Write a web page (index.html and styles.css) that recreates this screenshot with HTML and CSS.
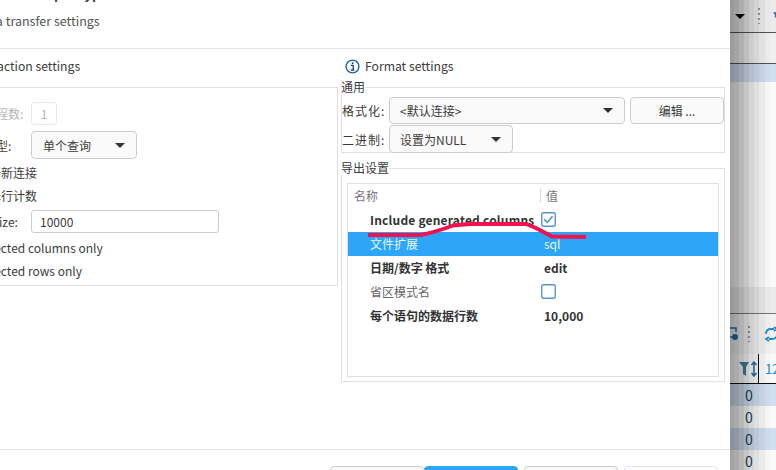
FILE: index.html
```html
<!DOCTYPE html>
<html lang="zh">
<head>
<meta charset="utf-8">
<title>Data transfer settings</title>
<link rel="stylesheet" href="styles.css">
</head>
<body>
<div class="screen">
  <main class="dialog">
    <header class="dialog-head">
      <div class="dialog-title">Transfer output type</div>
      <div class="dialog-sub">Data transfer settings</div>
    </header>
    <div class="columns">
      <section class="col-left">
        <div class="sec-title">Transaction settings</div>
        <div class="panel">
          <div class="form-row row-disabled">
            <span class="label muted">并行线程数:</span>
            <span class="input input-small muted">1</span>
          </div>
          <div class="form-row row-select">
            <span class="label">查询类型:</span>
            <span class="select select-query">单个查询<i class="caret"></i></span>
          </div>
          <div class="check-row first">打开新连接</div>
          <div class="check-row">选择行计数</div>
          <div class="form-row row-fetch">
            <span class="label">Fetch size:</span>
            <span class="input input-wide">10000</span>
          </div>
          <div class="check-row sel-first">Selected columns only</div>
          <div class="check-row">Selected rows only</div>
        </div>
      </section>
      <section class="col-right">
        <div class="sec-title sec-title-right">
          <svg class="info" width="15" height="15" viewBox="0 0 15 15"><circle cx="7.5" cy="7.5" r="6.4" fill="none" stroke="#1f5f9f" stroke-width="1.4"/><rect x="6.800" y="3.300" width="1.600" height="1.700" fill="#1f3f6f"/><path d="M5.900 6.400h2.300v4.500M5.800 11h3.500" fill="none" stroke="#1f3f6f" stroke-width="1.300"/></svg>
          Format settings
        </div>
        <fieldset class="group group-general">
          <legend>通用</legend>
          <div class="g-row g-row-1">
            <span class="g-label">格式化:</span>
            <span class="select select-conn">&lt;默认连接&gt;<i class="caret"></i></span>
            <span class="btn-edit">编辑 ...</span>
          </div>
          <div class="g-row">
            <span class="g-label">二进制:</span>
            <span class="select select-binary">设置为NULL<i class="caret"></i></span>
          </div>
        </fieldset>
        <fieldset class="group group-export">
          <legend>导出设置</legend>
          <div class="table">
            <div class="t-head"><span class="th-name">名称</span><span class="th-val">值</span></div>
            <div class="t-row bold"><span class="t-name t-latin">Include generated columns</span><span class="t-val t-check"><svg width="15" height="15" viewBox="0 0 15 15"><rect x=".75" y=".75" width="13.5" height="13.5" rx="1.5" fill="#fff" stroke="#5b93d0" stroke-width="1.4"/><path d="M3.200 7.400l3 3 5.400-6" fill="none" stroke="#5b93d0" stroke-width="1.600"/></svg></span></div>
            <div class="t-row selected"><span class="t-name">文件扩展</span><span class="t-val">sql</span></div>
            <div class="t-row bold"><span class="t-name">日期/数字 格式</span><span class="t-val">edit</span></div>
            <div class="t-row plain"><span class="t-name">省区模式名</span><span class="t-val t-check"><svg width="15" height="15" viewBox="0 0 15 15"><rect x=".75" y=".75" width="13.5" height="13.5" rx="1.5" fill="#fff" stroke="#5b93d0" stroke-width="1.4"/></svg></span></div>
            <div class="t-row bold"><span class="t-name">每个语句的数据行数</span><span class="t-val">10,000</span></div>
          </div>
        </fieldset>
      </section>
    </div>
    <footer class="dialog-foot">
      <span class="foot-btn"></span>
      <span class="foot-btn primary"></span>
      <span class="foot-btn gap"></span>
      <span class="foot-btn gap disabled"></span>
    </footer>
    <svg class="scribble" width="730" height="470" viewBox="0 0 730 470"><path d="M368 235H421Q436 232 453 225.500L470 224H526L536 228L552 236.500L586 237" fill="none" stroke="#f0134f" stroke-width="4"/></svg>
  </main>
  <aside class="backdrop">
    <div class="b-tool"><i class="caret dark-caret"></i><span class="dots d1"></span>
      <svg class="star" width="8" height="14" viewBox="0 0 8 14"><path d="M4 0l1 3 3 .5L5.500 6 6 9 4 7.500 1.500 9 2 6 0 3.500 3 3z" fill="#3a6fb0"/><path d="M3 8l5 4v2H6z" fill="#e0b060"/></svg></div>
    <div class="b-bar"></div>
    <div class="b-blue"></div>
    <div class="b-white"></div>
    <div class="b-grey"></div>
    <div class="b-tool2">
      <svg class="tool-doc" width="9" height="14" viewBox="0 0 9 14"><path d="M0 1h6v4M0 10h2" fill="none" stroke="#1f6fae" stroke-width="1.500"/><circle cx="5" cy="10" r="3" fill="#1f6fae"/></svg>
      <span class="dots d2"></span>
      <svg class="tool-sync" width="12" height="16" viewBox="0 0 12 16"><path d="M1 8Q1 3 6 3h3M9 1l3 2-3 2M12 8Q12 13 7 13H4M4 11l-3 2 3 2" fill="none" stroke="#1f8fd0" stroke-width="1.800"/></svg>
    </div>
    <div class="b-head">
      <svg class="filter" width="18" height="16" viewBox="0 0 18 16"><path d="M0 1h10L7 6v9L4 13V6z" fill="#3f7f9f"/><path d="M15 1v14M12.500 4L15 1l2.500 3M12.500 12l2.500 3 2.500-3" fill="none" stroke="#1f6fae" stroke-width="1.500"/></svg>
      <span class="head-sep"></span>
      <span class="head-num">12</span>
    </div>
    <div class="b-row tint">0</div>
    <div class="b-row">0</div>
    <div class="b-row tint">0</div>
    <div class="b-row">0</div>
    <div class="shade"></div>
  </aside>
</div>
</body>
</html>
```
FILE: styles.css
```css
* { box-sizing: border-box; }
html, body { margin: 0; height: 100%; }
body { font-family: "Noto Sans CJK SC", "Noto Sans", sans-serif; font-size: 12px; color: #3c3c3c; overflow: hidden; background: #fff; }
.screen { display: flex; width: 776px; height: 470px; overflow: hidden; }

.dialog { position: relative; flex: 0 0 730px; height: 470px; background: #fff; overflow: hidden; display: flex; flex-direction: column; }
.dialog-head { flex: 0 0 49px; border-bottom: 1px solid #e2e2e2; margin-left: -24px; }
.dialog-title { margin-top: -15px; height: 18px; line-height: 18px; font-size: 13px; font-weight: 700; }
.dialog-sub { margin-top: 9px; line-height: 18px; font-size: 12.5px; color: #555; }

.columns { flex: 1; min-height: 0; display: flex; margin-left: -48px; }
.col-left { flex: 0 0 386px; }
.col-right { flex: 0 0 384px; margin-left: 3px; }
.sec-title { height: 38px; line-height: 35px; padding-left: 14px; font-size: 12.2px; }
.sec-title-right { height: 31px; padding-left: 4px; display: flex; align-items: center; padding-top: 3px; }
.info { margin-right: 5px; }

.panel { height: 199px; border: 1px solid #e0e0e0; padding: 14px 0 0 7px; }
.form-row { display: flex; align-items: center; }
.label { flex: 0 0 71px; }
.muted { color: #b5b5b5; }
.input { border: 1px solid #ccc; border-radius: 3px; display: flex; align-items: center; background: #fff; }
.input-small { width: 26px; height: 23px; justify-content: center; border-color: #e6e9ee; }
.input-wide { width: 188px; height: 23px; padding-left: 8px; }
.row-select { margin-top: 6px; }
.select { display: flex; align-items: center; justify-content: space-between; background: #fafafa; border: 1px solid #ccc; border-radius: 4px; padding: 0 11px 0 10px; }
.select-query { width: 106px; height: 28px; padding-left: 11px; }
.caret { display: block; width: 0; height: 0; border-left: 5px solid transparent; border-right: 5px solid transparent; border-top: 5px solid #333; }
.check-row { height: 24px; line-height: 24px; padding-left: 17px; }
.check-row.first { margin-top: 2px; height: 23px; }
.row-fetch { margin-top: 2px; }
.sel-first { margin-top: 3px; height: 23px; line-height: 23px; }

.group { margin: 0; padding: 0; border: 1px solid #e0e0e0; min-width: 0; width: 384px; }
.group legend { padding: 0; height: 14px; line-height: 14px; margin-left: -1px; font-size: 12px; }
.group-general { height: 73px; padding-top: 3px; }
.g-row { display: flex; align-items: center; height: 28px; }
.g-row-1 { height: 27px; margin-bottom: 1px; }
.g-label { flex: 0 0 47px; letter-spacing: 1px; }
.select-conn { width: 236px; height: 27px; }
.select-binary { width: 124px; height: 28px; }
.btn-edit { width: 94px; height: 27px; margin-left: 5px; border: 1px solid #ccc; border-radius: 4px; background: #fafafa; display: flex; align-items: center; justify-content: center; }
.group-export { margin-top: 8px; height: 221px; padding: 8px 5px 5px; }
.group-export legend { margin-left: -6px; }

.table { border: 1px solid #e0e0e0; height: 194px; }
.t-head { height: 24px; display: flex; align-items: center; padding-bottom: 2px; color: #777; }
.th-name { flex: 0 0 192px; padding-left: 6px; }
.th-val { border-left: 1px solid #ddd; padding-left: 5px; height: 15px; line-height: 15px; }
.t-row { height: 24px; display: flex; align-items: center; padding-bottom: 2px; }
.t-name { flex: 0 0 196px; padding-left: 22px; white-space: nowrap; }
.t-latin { letter-spacing: .2px; }
.t-check { margin-left: -3px; display: flex; }
.bold { font-weight: 700; color: #333; }
.plain { color: #666; }
.selected { background: #2ea6f8; color: #e6f4ff; }

.dialog-foot { flex: 0 0 21px; min-height: 0; border-top: 1px solid #e2e2e2; padding: 16px 12px 0 0; display: flex; justify-content: flex-end; }
.foot-btn { flex: none; width: 94px; height: 30px; background: #fafafa; border: 1px solid #ccc; border-radius: 4px; }
.foot-btn.primary { background: #2ea6f8; border-color: #2ea6f8; }
.foot-btn.gap { margin-left: 6px; }
.foot-btn.disabled { border-color: #dfe6ef; background: #fff; }
.scribble { position: absolute; left: 0; top: 0; pointer-events: none; }

.backdrop { position: relative; flex: 0 0 46px; height: 470px; overflow: hidden; background: #fff; display: grid; grid-template-rows: 33px 31px 18px 205px 27px 40px 30px 22px 22px 22px 20px; color: #1c3c66; }
.b-tool { background: #f0f0f0; border-bottom: 1px solid #555; position: relative; display: flex; align-items: center; }
.b-bar { background: #f4f4f4; border-bottom: 1px solid #555; }
.b-blue { background: #d6e3f5; }
.b-white { background: #fff; }
.b-grey { background: #f0f0f0; border-bottom: 1px solid #777; }
.b-tool2 { background: #f6f6f6; display: flex; align-items: center; }
.b-head { background: #fff; border-bottom: 1px solid #111; display: flex; align-items: center; }
.b-row { background: #fff; padding-left: 15px; font-size: 14px; line-height: 22px; }
.b-row.tint { background: #d6e3f5; }
.dark-caret { margin-left: 5px; border-top-color: #000; }
.dots { display: block; width: 2px; height: 16px; background: repeating-linear-gradient(#999 0 2px, transparent 2px 5px); }
.d1 { margin-left: 13px; }
.star { margin-left: 13px; }
.d2 { margin-left: 9px; }
.tool-sync { margin-left: 15px; }
.filter { margin-left: 9px; }
.head-sep { width: 1px; height: 29px; background: #111; margin-left: 1px; }
.head-num { margin-left: 6px; font-size: 13px; color: #1f8fd0; }
.shade { position: absolute; inset: 0; pointer-events: none; background: linear-gradient(90deg, rgba(0,0,0,.36) 0 4px, rgba(0,0,0,.33) 4px 9px, rgba(0,0,0,.28) 9px 14px, rgba(0,0,0,.22) 14px 19px, rgba(0,0,0,.16) 19px 24px, rgba(0,0,0,.12) 24px 29px, rgba(0,0,0,.08) 29px 35px, rgba(0,0,0,.04) 35px 40px, rgba(0,0,0,.02) 40px); }
```
